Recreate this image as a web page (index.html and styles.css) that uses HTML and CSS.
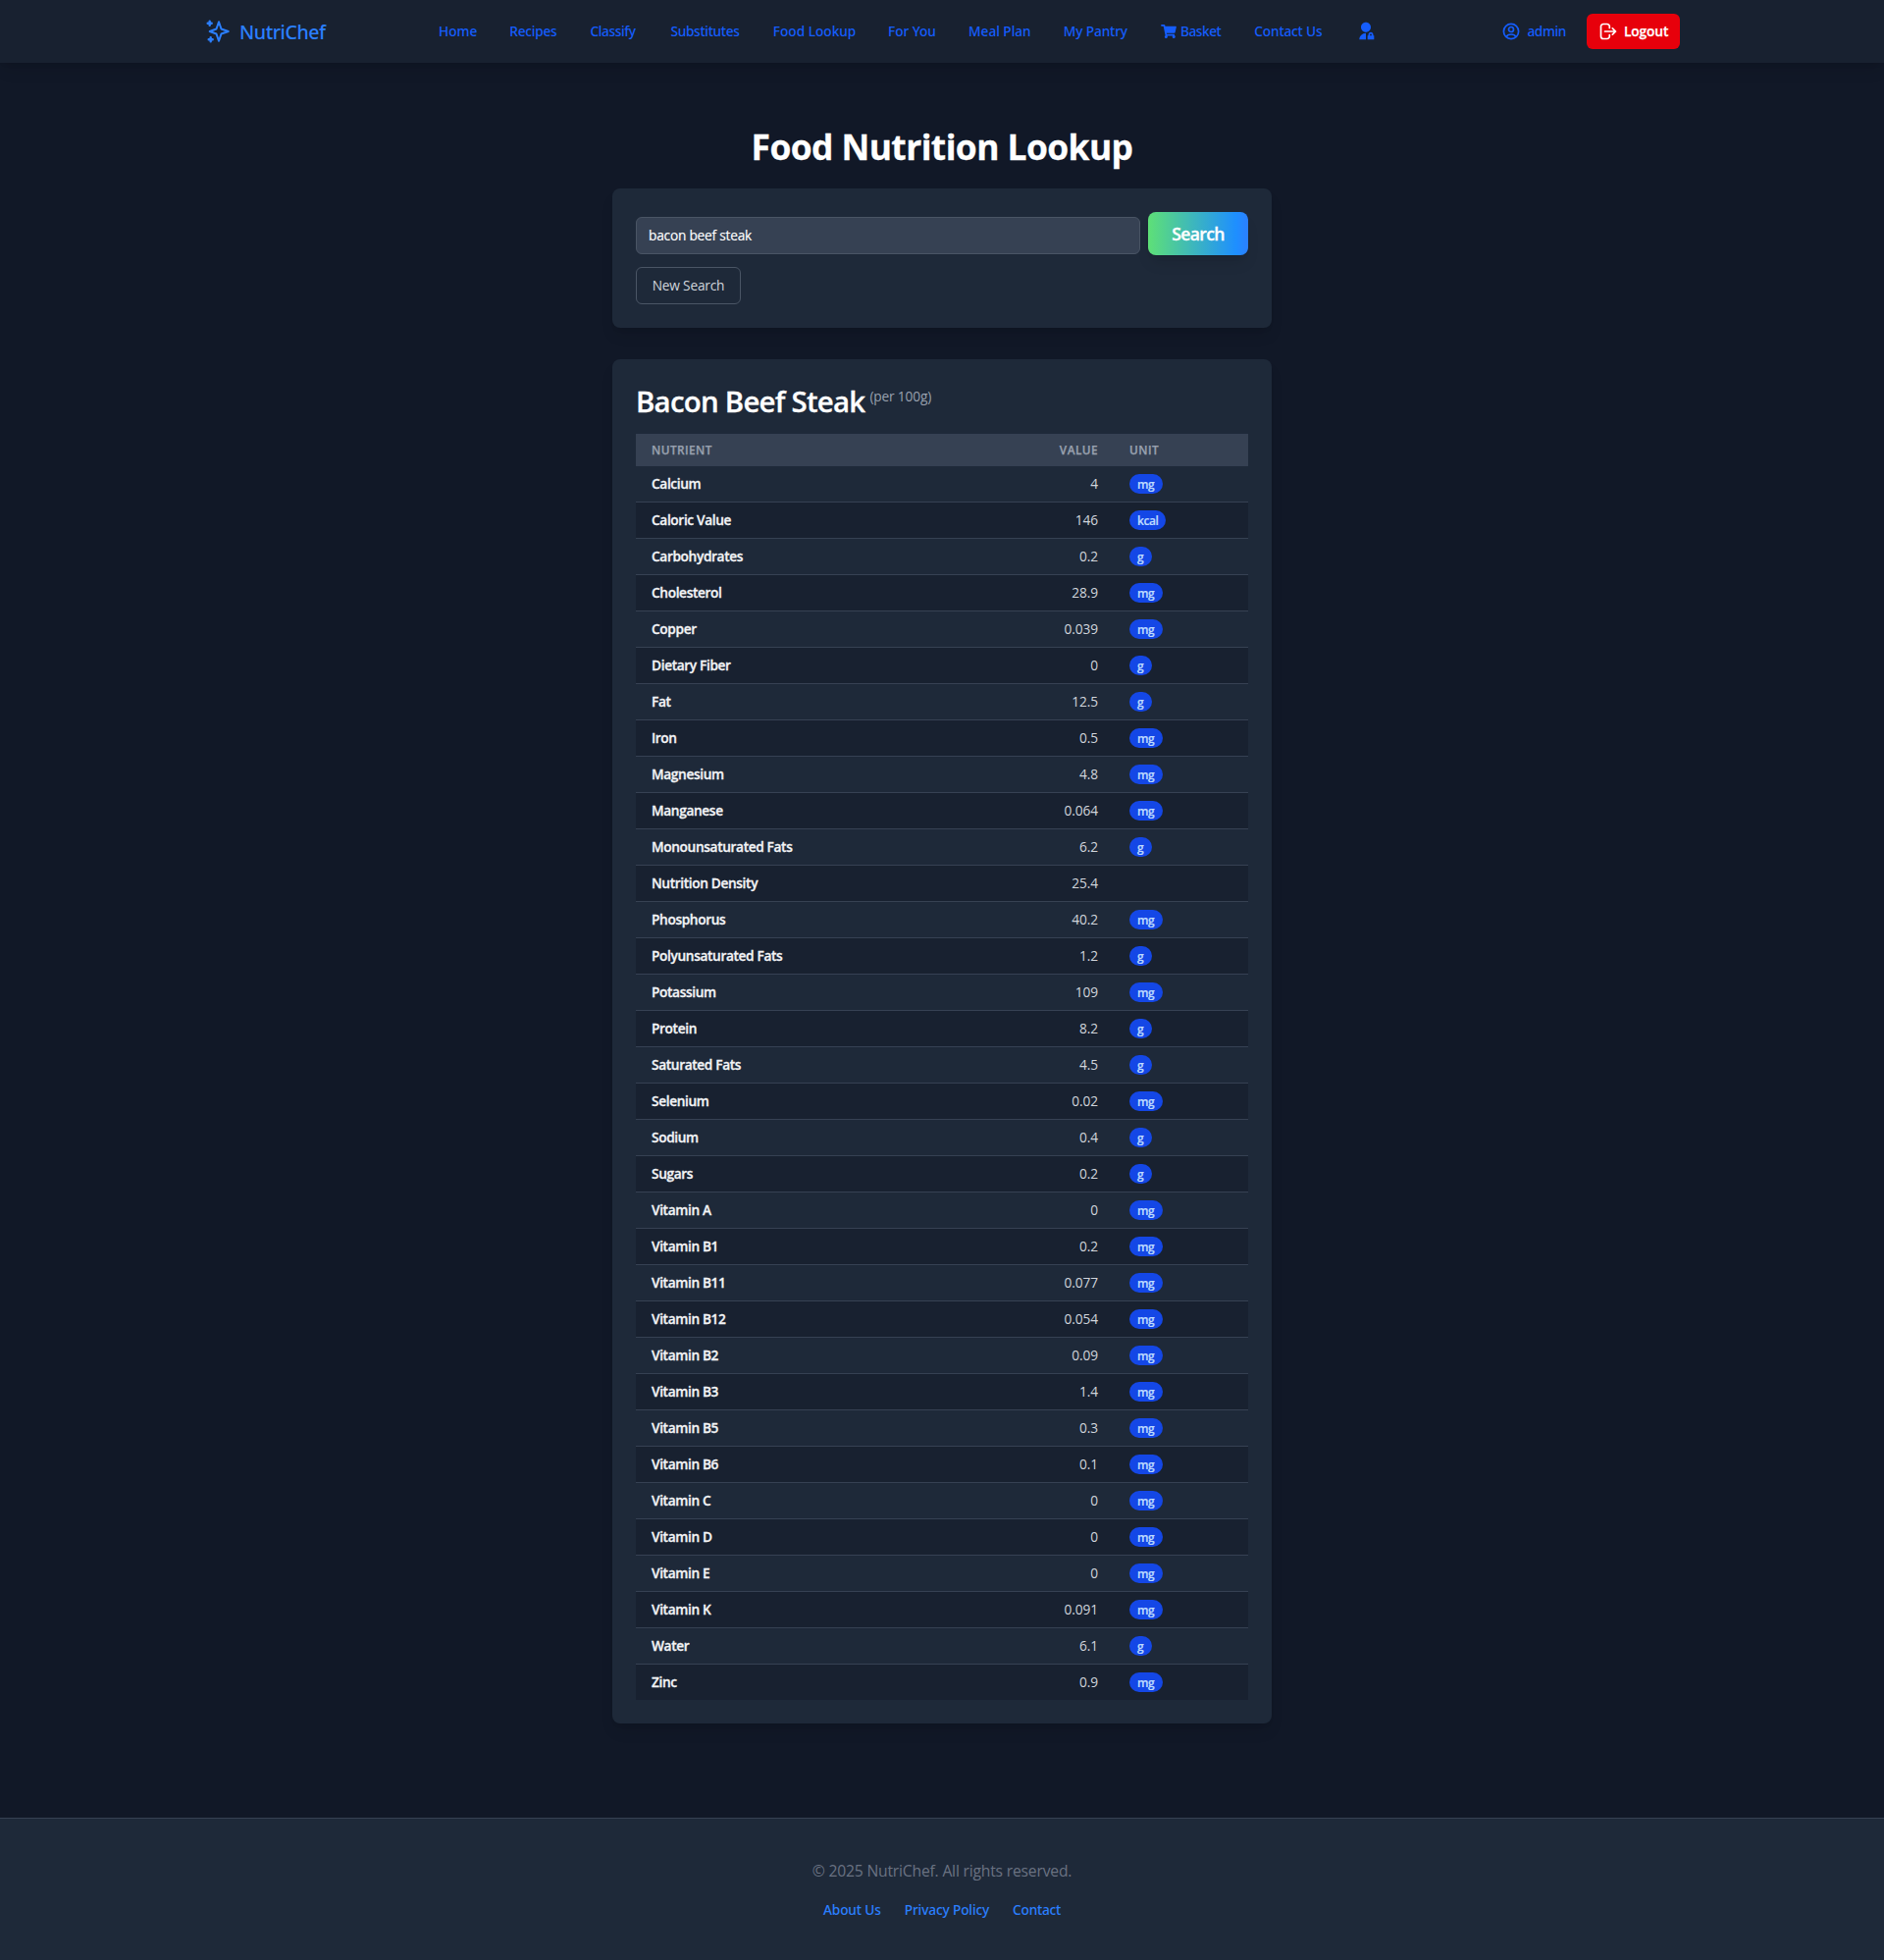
FILE: index.html
```html
<!DOCTYPE html>
<html lang="en">
<head>
<meta charset="utf-8">
<title>NutriChef - Food Nutrition Lookup</title>
<link rel="stylesheet" href="styles.css">
</head>
<body>
<header class="header">
  <div class="header-inner">
    <a class="brand">
      <svg class="brand-icon" viewBox="0 0 24 24" fill="none" stroke="currentColor" stroke-width="2" stroke-linejoin="round" stroke-linecap="round"><path d="M13 2Q14.4 10.6 22.7 12Q14.400 13.400 13 22Q11.600 13.400 3.700 12Q11.600 10.600 13 2Z" stroke="none"/><path d="M13 2.200L15.500 9.500L22.700 12L15.500 14.500L13 21.800L10.500 14.500L3.700 12L10.500 9.500Z"/><path d="M3.700 1.700v4M1.700 3.700h4M4.700 18.300v4M2.700 20.300h4" stroke-width="2.400"/></svg>
      <span>NutriChef</span>
    </a>
    <nav class="nav">
      <a class="home">Home</a>
      <a class="recipes">Recipes</a>
      <a class="classify">Classify</a>
      <a class="substitutes">Substitutes</a>
      <a class="food">Food Lookup</a>
      <a class="foryou">For You</a>
      <a class="meal">Meal Plan</a>
      <a class="pantry">My Pantry</a>
      <a class="basket"><svg width="16" height="14" viewBox="0 0 576 512" fill="currentColor"><path d="M528.12 301.319l47.273-208C578.806 78.301 567.391 64 551.99 64H159.208l-9.166-44.81C147.758 8.021 137.93 0 126.529 0H24C10.745 0 0 10.745 0 24v16c0 13.255 10.745 24 24 24h69.883l70.248 343.435C147.325 417.1 136 435.222 136 456c0 30.928 25.072 56 56 56s56-25.072 56-56c0-15.674-6.447-29.835-16.824-40h209.647C430.447 426.165 424 440.326 424 456c0 30.928 25.072 56 56 56s56-25.072 56-56c0-22.172-12.888-41.332-31.579-50.405l5.517-24.276c3.413-15.018-8.002-29.319-23.403-29.319H218.117l-6.545-32h293.145c11.206 0 20.92-7.754 23.403-18.681z"/></svg><span>Basket</span></a>
      <a class="contact">Contact Us</a>
      <a class="admin-panel"><svg width="20" height="20" viewBox="0 0 24 24" fill="currentColor"><path fill-rule="evenodd" d="M12 14V22H4C4 17.58 7.58 14 12 14ZM12 13C8.685 13 6 10.315 6 7C6 3.685 8.685 1 12 1S18 3.685 18 7S15.315 13 12 13ZM21 17H22V22H14V17H15V16C15 14.343 16.343 13 18 13S21 14.343 21 16V17ZM19 17V16C19 15.448 18.552 15 18 15S17 15.448 17 16V17H19Z"/></svg></a>
    </nav>
    <div class="account">
      <a class="user"><svg width="18" height="18" viewBox="0 0 18 18" fill="none" stroke="currentColor" stroke-width="1.7"><circle cx="9" cy="9" r="7.600"/><circle cx="9" cy="7" r="2.500"/><path d="M4.300 14.400C5 12.600 6.800 12 9 12s4 .6 4.700 2.400"/></svg><span>admin</span></a>
      <a class="logout"><svg width="18" height="18" viewBox="0 0 18 18" fill="none" stroke="currentColor" stroke-width="1.700" stroke-linecap="round" stroke-linejoin="round"><path d="M10.300 5.500V4A2.500 2.500 0 0 0 7.800 1.500H4A2.500 2.500 0 0 0 1.500 4v10A2.500 2.500 0 0 0 4 16.500h3.800A2.500 2.500 0 0 0 10.300 14v-1.500M5.500 9h11M13.300 5.800 16.500 9l-3.200 3.200"/></svg><span>Logout</span></a>
    </div>
  </div>
</header>

<main class="main">
  <h1>Food Nutrition Lookup</h1>
  <section class="card search-card">
    <form class="search-row">
      <input type="text" value="bacon beef steak">
      <button type="button" class="search-btn">Search</button>
    </form>
    <button type="button" class="new-btn">New Search</button>
  </section>

  <section class="card">
    <div class="title"><h2>Bacon Beef Steak</h2><span>(per 100g)</span></div>
    <table>
      <thead><tr><th>NUTRIENT</th><th>VALUE</th><th>UNIT</th></tr></thead>
      <tbody>
        <tr><td>Calcium</td><td>4</td><td><span class="mg">mg</span></td></tr>
        <tr><td>Caloric Value</td><td>146</td><td><span class="kcal">kcal</span></td></tr>
        <tr><td>Carbohydrates</td><td>0.2</td><td><span class="g">g</span></td></tr>
        <tr><td>Cholesterol</td><td>28.9</td><td><span class="mg">mg</span></td></tr>
        <tr><td>Copper</td><td>0.039</td><td><span class="mg">mg</span></td></tr>
        <tr><td>Dietary Fiber</td><td>0</td><td><span class="g">g</span></td></tr>
        <tr><td>Fat</td><td>12.5</td><td><span class="g">g</span></td></tr>
        <tr><td>Iron</td><td>0.5</td><td><span class="mg">mg</span></td></tr>
        <tr><td>Magnesium</td><td>4.8</td><td><span class="mg">mg</span></td></tr>
        <tr><td>Manganese</td><td>0.064</td><td><span class="mg">mg</span></td></tr>
        <tr><td>Monounsaturated Fats</td><td>6.2</td><td><span class="g">g</span></td></tr>
        <tr><td>Nutrition Density</td><td>25.4</td><td></td></tr>
        <tr><td>Phosphorus</td><td>40.2</td><td><span class="mg">mg</span></td></tr>
        <tr><td>Polyunsaturated Fats</td><td>1.2</td><td><span class="g">g</span></td></tr>
        <tr><td>Potassium</td><td>109</td><td><span class="mg">mg</span></td></tr>
        <tr><td>Protein</td><td>8.2</td><td><span class="g">g</span></td></tr>
        <tr><td>Saturated Fats</td><td>4.5</td><td><span class="g">g</span></td></tr>
        <tr><td>Selenium</td><td>0.02</td><td><span class="mg">mg</span></td></tr>
        <tr><td>Sodium</td><td>0.4</td><td><span class="g">g</span></td></tr>
        <tr><td>Sugars</td><td>0.2</td><td><span class="g">g</span></td></tr>
        <tr><td>Vitamin A</td><td>0</td><td><span class="mg">mg</span></td></tr>
        <tr><td>Vitamin B1</td><td>0.2</td><td><span class="mg">mg</span></td></tr>
        <tr><td>Vitamin B11</td><td>0.077</td><td><span class="mg">mg</span></td></tr>
        <tr><td>Vitamin B12</td><td>0.054</td><td><span class="mg">mg</span></td></tr>
        <tr><td>Vitamin B2</td><td>0.09</td><td><span class="mg">mg</span></td></tr>
        <tr><td>Vitamin B3</td><td>1.4</td><td><span class="mg">mg</span></td></tr>
        <tr><td>Vitamin B5</td><td>0.3</td><td><span class="mg">mg</span></td></tr>
        <tr><td>Vitamin B6</td><td>0.1</td><td><span class="mg">mg</span></td></tr>
        <tr><td>Vitamin C</td><td>0</td><td><span class="mg">mg</span></td></tr>
        <tr><td>Vitamin D</td><td>0</td><td><span class="mg">mg</span></td></tr>
        <tr><td>Vitamin E</td><td>0</td><td><span class="mg">mg</span></td></tr>
        <tr><td>Vitamin K</td><td>0.091</td><td><span class="mg">mg</span></td></tr>
        <tr><td>Water</td><td>6.1</td><td><span class="g">g</span></td></tr>
        <tr><td>Zinc</td><td>0.9</td><td><span class="mg">mg</span></td></tr>
      </tbody>
    </table>
  </section>
</main>

<footer class="footer">
  <p>© 2025 NutriChef. All rights reserved.</p>
  <div class="footer-links"><a class="about">About Us</a><a class="privacy">Privacy Policy</a><a class="fcontact">Contact</a></div>
</footer>
</body>
</html>
```
FILE: styles.css
```css
* { box-sizing: border-box; margin: 0; padding: 0; }

body {
  background: #111827;
  color: #fff;
  font-family: "Open Sans", "Noto Sans", sans-serif;
  font-size: 13.7px;
}

svg { display: block; flex: none; }

/* Header */
.header {
  position: relative;
  height: 64px;
  background: #182130;
  box-shadow: 0 10px 15px -3px rgba(0, 0, 0, .1), 0 4px 6px -4px rgba(0, 0, 0, .1);
}
.header-inner {
  width: 1536px;
  height: 64px;
  margin: 0 auto;
  padding: 0 16px;
  display: flex;
  align-items: center;
  font-family: "Noto Sans", sans-serif;
  font-weight: 500;
  color: #155dfc;
  white-space: nowrap;
}
.brand {
  display: flex;
  align-items: center;
  gap: 10px;
  width: 239px;
  padding-left: 2px;
  color: #2b7fff;
  font-size: 19.6px;
  letter-spacing: -.43px;
}
.brand-icon { width: 24px; height: 24px; }

.nav { display: flex; align-items: center; gap: 34px; }
.nav a:not(.basket, .admin-panel), .nav span, .account span { padding-bottom: 2px; }
.home { width: 38.3px; }
.recipes { width: 48.1px; letter-spacing: -.25px; }
.classify { width: 48.2px; letter-spacing: -.4px; }
.substitutes { width: 70.2px; letter-spacing: -.35px; }
.food { width: 83.3px; letter-spacing: -.02px; }
.foryou { width: 48px; letter-spacing: -.06px; }
.meal { width: 62.8px; letter-spacing: -.04px; }
.pantry { width: 65.2px; letter-spacing: -.15px; }
.basket { width: 61.3px; display: flex; align-items: center; gap: 4px; letter-spacing: -.5px; }
.contact { width: 69.7px; letter-spacing: -.2px; }

.account { margin-left: auto; display: flex; align-items: center; gap: 21px; }
.user { display: flex; align-items: center; gap: 7px; letter-spacing: -.4px; }
.logout {
  display: flex;
  align-items: center;
  gap: 7px;
  width: 95px;
  height: 36px;
  padding-left: 13px;
  border-radius: 6px;
  background: #e7000b;
  color: #fff;
  font-family: "Open Sans", sans-serif;
  font-weight: 600;
  letter-spacing: -.1px;
  -webkit-text-stroke: .25px;
}

/* Main */
.main { width: 672px; margin: 0 auto; padding: 64px 0 96px; }
h1 {
  padding-top: 1px;
  margin-bottom: 23px;
  font-size: 35.4px;
  line-height: 40px;
  font-weight: 700;
  letter-spacing: -.58px;
  text-align: center;
  -webkit-text-stroke: .3px;
}
.card {
  padding: 24px;
  border-radius: 8px;
  background: #1e2939;
  box-shadow: 0 10px 15px -3px rgba(0, 0, 0, .1), 0 4px 6px -4px rgba(0, 0, 0, .1);
}
.search-card { height: 142px; margin-bottom: 32px; }
.search-row { display: flex; gap: 8px; margin-bottom: 12px; }
input {
  width: 514px;
  height: 38px;
  margin-top: 5px;
  padding: 0 12px 1px;
  border: 1px solid #4a5565;
  border-radius: 6px;
  background: #364153;
  color: #fff;
  font: 400 13.7px "Open Sans", sans-serif;
  letter-spacing: -.22px;
  -webkit-text-stroke: .15px;
}
button { font-family: "Open Sans", sans-serif; border: 0; }
.search-btn {
  width: 102px;
  height: 44px;
  border-radius: 8px;
  background: linear-gradient(90deg, #5ee077, #1e8fff 88%, #2b7fff);
  color: #fff;
  font-size: 17.6px;
  font-weight: 600;
  letter-spacing: -.7px;
  -webkit-text-stroke: .3px;
  box-shadow: 0 10px 15px -3px rgba(0, 0, 0, .1), 0 4px 6px -4px rgba(0, 0, 0, .1);
}
.new-btn {
  display: block;
  width: 107px;
  height: 38px;
  padding-bottom: 2px;
  border: 1px solid #4a5565;
  border-radius: 6px;
  background: none;
  color: #d1d5dc;
  font-size: 13.7px;
  letter-spacing: -.19px;
}

.title { display: flex; gap: 5px; height: 52px; }
h2 { padding-top: 1px; font-size: 29.4px; line-height: 36px; font-weight: 600; letter-spacing: -.75px; -webkit-text-stroke: .3px; }
.title span { color: #99a1af; line-height: 28px; letter-spacing: -.15px; }

table { width: 624px; border-spacing: 0; table-layout: fixed; }
th {
  height: 33px;
  padding: 0 16px 2px;
  background: #364153;
  color: #99a1af;
  font-size: 11.8px;
  font-weight: 600;
  letter-spacing: .45px;
  text-align: left;
  -webkit-text-stroke: .25px;
}
th:nth-child(1) { width: 300px; }
th:nth-child(2) { width: 187px; }
th:nth-child(2), td:nth-child(2) { text-align: right; }
td { height: 37px; padding: 0 16px; border-bottom: 1px solid #364153; line-height: 20px; }
td:nth-child(1) { color: #f3f4f6; font-weight: 600; letter-spacing: -.36px; -webkit-text-stroke: .3px; }
td:nth-child(2) { color: #d1d5dc; letter-spacing: -.1px; }
tbody tr:nth-child(even) { background: #182130; }
tbody tr:last-child td { height: 36px; border-bottom: 0; }
td span {
  display: block;
  height: 20px;
  padding-left: 8px;
  border-radius: 10px;
  background: #1447e6;
  color: #bedbff;
  font-size: 12px;
  line-height: 22px;
  font-weight: 600;
  letter-spacing: -.4px;
  -webkit-text-stroke: .2px;
}
.mg { width: 34px; }
.kcal { width: 37px; }
.g { width: 23px; }

/* Footer */
.footer {
  height: 145px;
  padding-top: 41px;
  border-top: 1px solid #364153;
  background: #1e2939;
  text-align: center;
}
.footer p { color: #6a7282; font-size: 15.7px; line-height: 24px; letter-spacing: -.2px; margin-bottom: 16px; }
.footer-links {
  display: flex;
  justify-content: center;
  gap: 24px;
  color: #2b7fff;
  font-family: "Noto Sans", sans-serif;
  font-weight: 500;
  line-height: 24px;
}
.about { letter-spacing: -.15px; }
.privacy { letter-spacing: -.15px; }
.fcontact { letter-spacing: -.25px; }
```
